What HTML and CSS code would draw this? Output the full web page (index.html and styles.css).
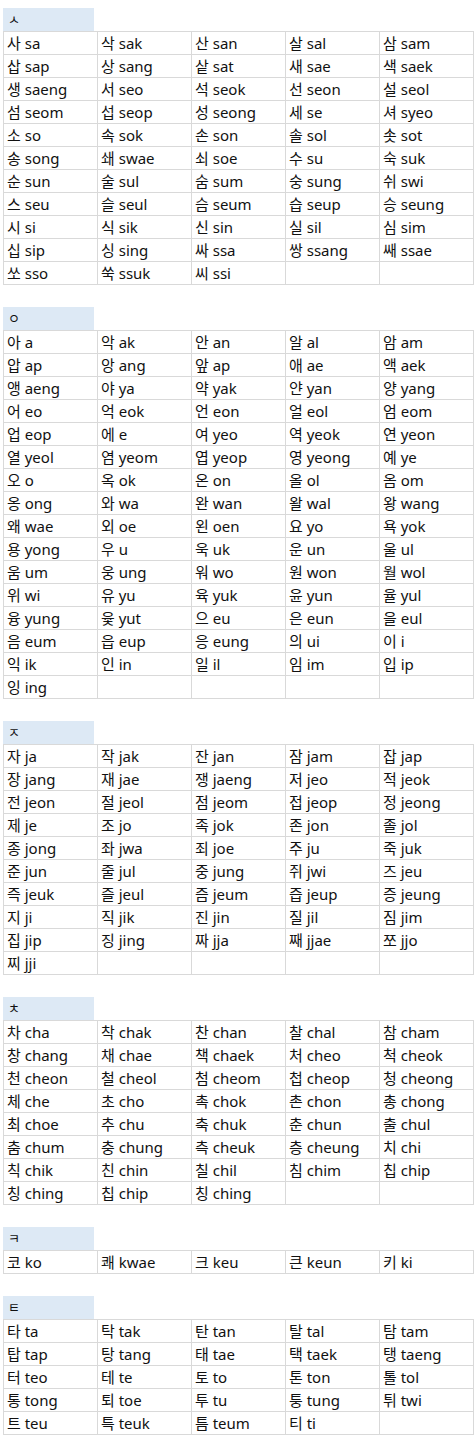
FILE: index.html
```html
<!DOCTYPE html>
<html lang="ko">
<head>
  <meta charset="UTF-8">
  <title>한글 로마자 표기</title>
  <link rel="stylesheet" href="styles.css">
</head>
<body>
  <div class="page">

    <div class="group">
      <div class="group-head">ㅅ</div>
      <table class="syllables">
        <tr><td>사 sa</td><td>삭 sak</td><td>산 san</td><td>살 sal</td><td>삼 sam</td></tr>
        <tr><td>삽 sap</td><td>상 sang</td><td>샅 sat</td><td>새 sae</td><td>색 saek</td></tr>
        <tr><td>생 saeng</td><td>서 seo</td><td>석 seok</td><td>선 seon</td><td>설 seol</td></tr>
        <tr><td>섬 seom</td><td>섭 seop</td><td>성 seong</td><td>세 se</td><td>셔 syeo</td></tr>
        <tr><td>소 so</td><td>속 sok</td><td>손 son</td><td>솔 sol</td><td>솟 sot</td></tr>
        <tr><td>송 song</td><td>쇄 swae</td><td>쇠 soe</td><td>수 su</td><td>숙 suk</td></tr>
        <tr><td>순 sun</td><td>술 sul</td><td>숨 sum</td><td>숭 sung</td><td>쉬 swi</td></tr>
        <tr><td>스 seu</td><td>슬 seul</td><td>슴 seum</td><td>습 seup</td><td>승 seung</td></tr>
        <tr><td>시 si</td><td>식 sik</td><td>신 sin</td><td>실 sil</td><td>심 sim</td></tr>
        <tr><td>십 sip</td><td>싱 sing</td><td>싸 ssa</td><td>쌍 ssang</td><td>쌔 ssae</td></tr>
        <tr><td>쏘 sso</td><td>쑥 ssuk</td><td>씨 ssi</td><td></td><td></td></tr>
      </table>
    </div>

    <div class="group">
      <div class="group-head">ㅇ</div>
      <table class="syllables">
        <tr><td>아 a</td><td>악 ak</td><td>안 an</td><td>알 al</td><td>암 am</td></tr>
        <tr><td>압 ap</td><td>앙 ang</td><td>앞 ap</td><td>애 ae</td><td>액 aek</td></tr>
        <tr><td>앵 aeng</td><td>야 ya</td><td>약 yak</td><td>얀 yan</td><td>양 yang</td></tr>
        <tr><td>어 eo</td><td>억 eok</td><td>언 eon</td><td>얼 eol</td><td>엄 eom</td></tr>
        <tr><td>업 eop</td><td>에 e</td><td>여 yeo</td><td>역 yeok</td><td>연 yeon</td></tr>
        <tr><td>열 yeol</td><td>염 yeom</td><td>엽 yeop</td><td>영 yeong</td><td>예 ye</td></tr>
        <tr><td>오 o</td><td>옥 ok</td><td>온 on</td><td>올 ol</td><td>옴 om</td></tr>
        <tr><td>옹 ong</td><td>와 wa</td><td>완 wan</td><td>왈 wal</td><td>왕 wang</td></tr>
        <tr><td>왜 wae</td><td>외 oe</td><td>왼 oen</td><td>요 yo</td><td>욕 yok</td></tr>
        <tr><td>용 yong</td><td>우 u</td><td>욱 uk</td><td>운 un</td><td>울 ul</td></tr>
        <tr><td>움 um</td><td>웅 ung</td><td>워 wo</td><td>원 won</td><td>월 wol</td></tr>
        <tr><td>위 wi</td><td>유 yu</td><td>육 yuk</td><td>윤 yun</td><td>율 yul</td></tr>
        <tr><td>융 yung</td><td>윷 yut</td><td>으 eu</td><td>은 eun</td><td>을 eul</td></tr>
        <tr><td>음 eum</td><td>읍 eup</td><td>응 eung</td><td>의 ui</td><td>이 i</td></tr>
        <tr><td>익 ik</td><td>인 in</td><td>일 il</td><td>임 im</td><td>입 ip</td></tr>
        <tr><td>잉 ing</td><td></td><td></td><td></td><td></td></tr>
      </table>
    </div>

    <div class="group">
      <div class="group-head">ㅈ</div>
      <table class="syllables">
        <tr><td>자 ja</td><td>작 jak</td><td>잔 jan</td><td>잠 jam</td><td>잡 jap</td></tr>
        <tr><td>장 jang</td><td>재 jae</td><td>쟁 jaeng</td><td>저 jeo</td><td>적 jeok</td></tr>
        <tr><td>전 jeon</td><td>절 jeol</td><td>점 jeom</td><td>접 jeop</td><td>정 jeong</td></tr>
        <tr><td>제 je</td><td>조 jo</td><td>족 jok</td><td>존 jon</td><td>졸 jol</td></tr>
        <tr><td>종 jong</td><td>좌 jwa</td><td>죄 joe</td><td>주 ju</td><td>죽 juk</td></tr>
        <tr><td>준 jun</td><td>줄 jul</td><td>중 jung</td><td>쥐 jwi</td><td>즈 jeu</td></tr>
        <tr><td>즉 jeuk</td><td>즐 jeul</td><td>즘 jeum</td><td>즙 jeup</td><td>증 jeung</td></tr>
        <tr><td>지 ji</td><td>직 jik</td><td>진 jin</td><td>질 jil</td><td>짐 jim</td></tr>
        <tr><td>집 jip</td><td>징 jing</td><td>짜 jja</td><td>째 jjae</td><td>쪼 jjo</td></tr>
        <tr><td>찌 jji</td><td></td><td></td><td></td><td></td></tr>
      </table>
    </div>

    <div class="group">
      <div class="group-head">ㅊ</div>
      <table class="syllables">
        <tr><td>차 cha</td><td>착 chak</td><td>찬 chan</td><td>찰 chal</td><td>참 cham</td></tr>
        <tr><td>창 chang</td><td>채 chae</td><td>책 chaek</td><td>처 cheo</td><td>척 cheok</td></tr>
        <tr><td>천 cheon</td><td>철 cheol</td><td>첨 cheom</td><td>첩 cheop</td><td>청 cheong</td></tr>
        <tr><td>체 che</td><td>초 cho</td><td>촉 chok</td><td>촌 chon</td><td>총 chong</td></tr>
        <tr><td>최 choe</td><td>추 chu</td><td>축 chuk</td><td>춘 chun</td><td>출 chul</td></tr>
        <tr><td>춤 chum</td><td>충 chung</td><td>측 cheuk</td><td>층 cheung</td><td>치 chi</td></tr>
        <tr><td>칙 chik</td><td>친 chin</td><td>칠 chil</td><td>침 chim</td><td>칩 chip</td></tr>
        <tr><td>칭 ching</td><td>칩 chip</td><td>칭 ching</td><td></td><td></td></tr>
      </table>
    </div>

    <div class="group">
      <div class="group-head">ㅋ</div>
      <table class="syllables">
        <tr><td>코 ko</td><td>쾌 kwae</td><td>크 keu</td><td>큰 keun</td><td>키 ki</td></tr>
      </table>
    </div>

    <div class="group">
      <div class="group-head">ㅌ</div>
      <table class="syllables">
        <tr><td>타 ta</td><td>탁 tak</td><td>탄 tan</td><td>탈 tal</td><td>탐 tam</td></tr>
        <tr><td>탑 tap</td><td>탕 tang</td><td>태 tae</td><td>택 taek</td><td>탱 taeng</td></tr>
        <tr><td>터 teo</td><td>테 te</td><td>토 to</td><td>톤 ton</td><td>톨 tol</td></tr>
        <tr><td>통 tong</td><td>퇴 toe</td><td>투 tu</td><td>퉁 tung</td><td>튀 twi</td></tr>
        <tr><td>트 teu</td><td>특 teuk</td><td>틈 teum</td><td>티 ti</td><td></td></tr>
      </table>
    </div>

  </div>
</body>
</html>
```

FILE: styles.css
```css
body {
  margin: 0;
  background-color: #fff;
  color: #111;
  font-family: "Noto Sans", "Noto Sans CJK KR", sans-serif;
  font-size: 15px;
}

.page {
  padding: 8px 0 0 3px;
}

.group + .group {
  margin-top: 22px;
}

.group-head {
  width: 86px;
  height: 23px;
  padding-left: 5px;
  background-color: #dde9f5;
  line-height: 23px;
  font-size: 13px;
}

.syllables {
  border-collapse: separate;
  border-spacing: 0;
  border-top: 1px solid #d9d9d9;
  border-left: 1px solid #d9d9d9;
  table-layout: fixed;
}

.syllables td {
  width: 90px;
  height: 22px;
  padding: 0 0 0 3px;
  border-right: 1px solid #d9d9d9;
  border-bottom: 1px solid #d9d9d9;
  line-height: 22px;
  white-space: nowrap;
  vertical-align: middle;
}
```
